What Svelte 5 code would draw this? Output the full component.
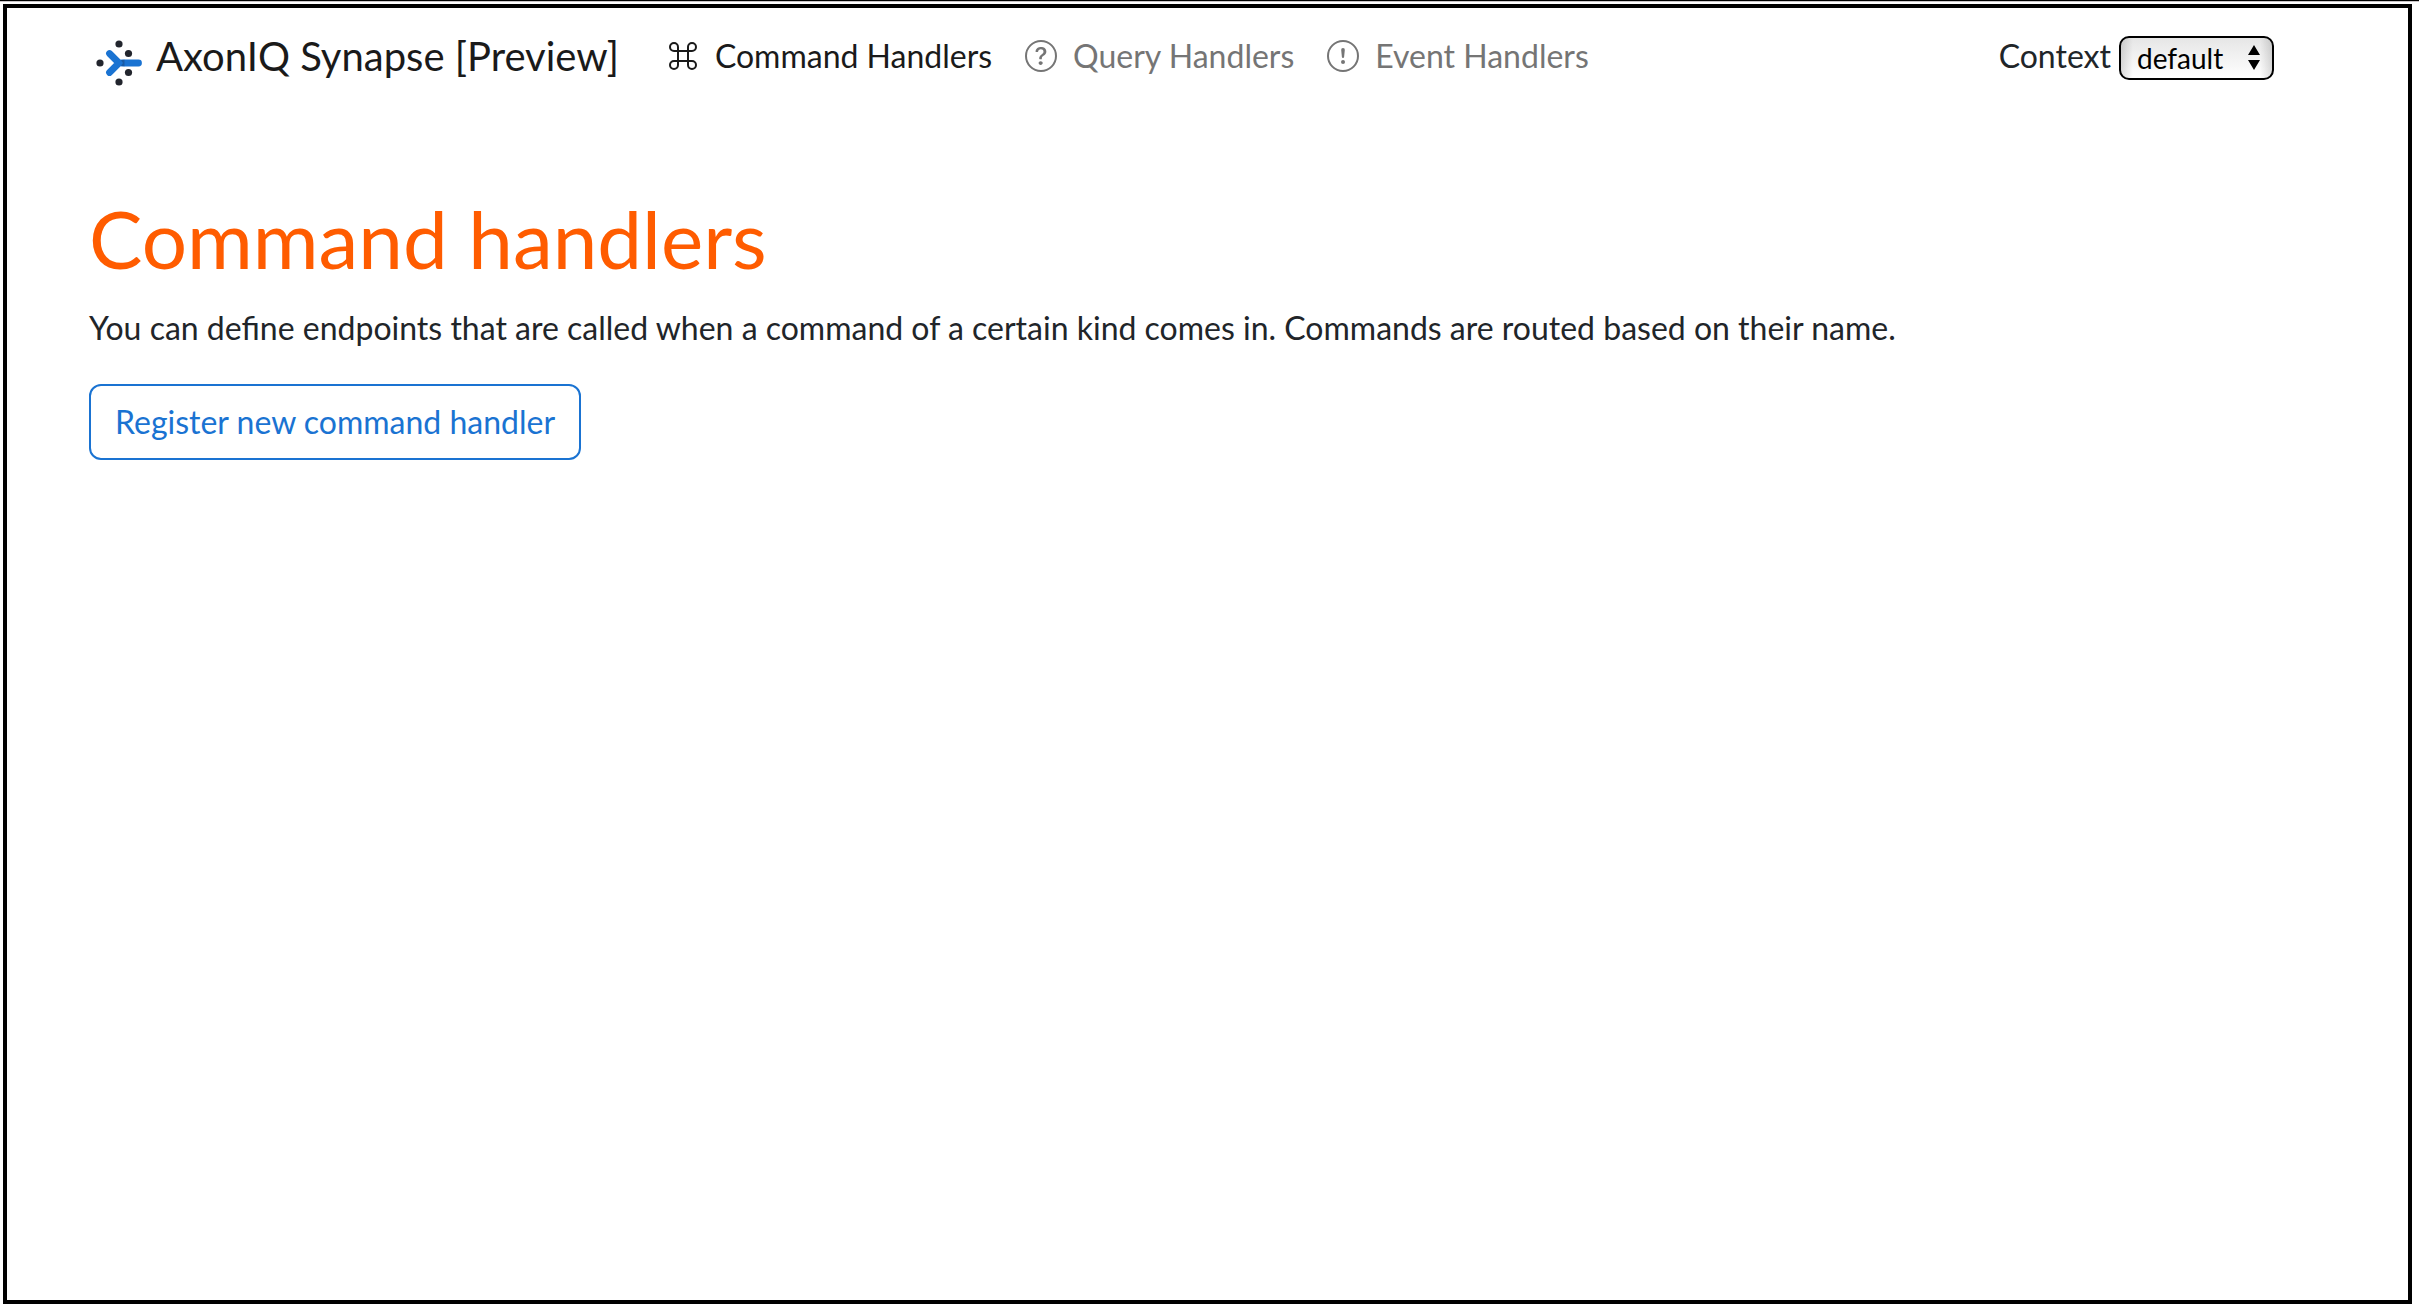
<script>
  let context = $state('default');
  let active = $state('command');
</script>

<div class="window">
  <div class="frame">
    <header>
      <a class="brand" href="#home">
        <svg class="logo" viewBox="0 0 46 46" aria-hidden="true">
          <g fill="#22252d">
            <circle cx="23" cy="4" r="3.6" />
            <circle cx="32.5" cy="13.5" r="3.6" />
            <circle cx="4" cy="23" r="3.6" />
            <circle cx="32.5" cy="32.5" r="3.6" />
            <circle cx="23" cy="42" r="3.6" />
          </g>
          <g fill="none" stroke="#1a73d2" stroke-width="6.8" stroke-linecap="round" stroke-linejoin="round">
            <path d="M26 23H42.5" />
            <path d="M13.5 13.5L23 23L13.5 32.5" />
          </g>
          <path d="M25 20.2L28.5 19.8V26.2L25 25.8L27 23Z" fill="#195aa5" />
        </svg>
        <span>AxonIQ Synapse [Preview]</span>
      </a>
      <nav>
        <a href="#command" class:active={active === 'command'} onclick={() => (active = 'command')}>
          <svg viewBox="0 0 16 16" fill="currentColor" aria-hidden="true">
            <path d="M3.5 2A1.5 1.5 0 0 1 5 3.5V5H3.500a1.500 1.500 0 1 1 0-3zM6 5V3.500A2.500 2.500 0 1 0 3.500 6H5v4H3.500A2.500 2.500 0 1 0 6 12.500V11h4v1.500a2.500 2.500 0 1 0 2.500-2.500H11V6h1.500A2.500 2.500 0 1 0 10 3.500V5H6zm4 1v4H6V6h4zm1-1V3.500A1.500 1.500 0 1 1 12.500 5H11zm0 6h1.500a1.500 1.500 0 1 1-1.500 1.500V11zm-6 0v1.500A1.500 1.500 0 1 1 3.500 11H5z" />
          </svg>
          <span>Command Handlers</span>
        </a>
        <a href="#query" class:active={active === 'query'} onclick={() => (active = 'query')}>
          <svg viewBox="0 0 16 16" fill="currentColor" aria-hidden="true">
            <path d="M8 15A7 7 0 1 1 8 1a7 7 0 0 1 0 14zm0 1A8 8 0 1 0 8 0a8 8 0 0 0 0 16z" />
            <path d="M5.255 5.786a.237.237 0 0 0 .241.247h.825c.138 0 .248-.113.266-.250.090-.656.540-1.134 1.342-1.134.686 0 1.314.343 1.314 1.168 0 .635-.374.927-.965 1.371-.673.489-1.206 1.060-1.168 1.987l.003.217a.250.250 0 0 0 .250.246h.811a.250.250 0 0 0 .250-.250v-.105c0-.718.273-.927 1.010-1.486.609-.463 1.244-.977 1.244-2.056 0-1.511-1.276-2.241-2.673-2.241-1.267 0-2.655.590-2.750 2.286zm1.557 5.763c0 .533.425.927 1.010.927.609 0 1.028-.394 1.028-.927 0-.552-.420-.940-1.029-.940-.584 0-1.009.388-1.009.940z" />
          </svg>
          <span>Query Handlers</span>
        </a>
        <a href="#event" class:active={active === 'event'} onclick={() => (active = 'event')}>
          <svg viewBox="0 0 16 16" fill="currentColor" aria-hidden="true">
            <path d="M8 15A7 7 0 1 1 8 1a7 7 0 0 1 0 14zm0 1A8 8 0 1 0 8 0a8 8 0 0 0 0 16z" />
            <path d="M7.002 11a1 1 0 1 1 2 0 1 1 0 0 1-2 0zM7.100 4.995a.905.905 0 1 1 1.800 0l-.350 3.507a.552.552 0 0 1-1.100 0L7.100 4.995z" />
          </svg>
          <span>Event Handlers</span>
        </a>
      </nav>
      <div class="context">
        <label for="context">Context</label>
        <div class="picker">
          <select id="context" bind:value={context}>
            <option value="default">default</option>
          </select>
          <svg viewBox="0 0 12 26" aria-hidden="true"><path d="M6 0L12 10H0ZM0 15H12L6 25Z" /></svg>
        </div>
      </div>
    </header>
    <main>
      <h1>Command handlers</h1>
      <p>You can define endpoints that are called when a command of a certain kind comes in. Commands are routed based on their name.</p>
      <button type="button">Register new command handler</button>
    </main>
  </div>
</div>

<style>
  :global(body) {
    margin: 0;
    background: #fff;
  }
  .window {
    box-sizing: border-box;
    min-height: 100vh;
    display: flex;
    flex-direction: column;
    border-top: 1px solid #000;
    padding: 3px 7px 1px 3px;
    box-shadow: inset 0 1px #c9c5c7;
    font: 32px/48px Lato, sans-serif;
    color: #212529;
  }
  .frame {
    flex: 1;
    border: 4px solid #000;
  }
  header {
    display: flex;
    align-items: center;
    padding: 18px 134px 18px 89px;
  }
  a {
    display: flex;
    align-items: center;
    text-decoration: none;
    white-space: nowrap;
  }
  .brand {
    gap: 14px;
    margin-right: 48px;
    font-size: 40px;
    line-height: 60px;
    color: #1a1a1a;
  }
  .logo {
    width: 46px;
    height: 46px;
    margin-top: 14px;
  }
  nav {
    display: flex;
    gap: 33px;
  }
  nav a {
    gap: 16px;
    color: #757575;
  }
  nav a.active {
    color: #1a1a1a;
  }
  nav svg {
    width: 32px;
    height: 32px;
  }
  .context {
    display: flex;
    align-items: center;
    gap: 8px;
    margin-left: auto;
  }
  .picker {
    display: grid;
    align-items: center;
    padding-top: 4px;
  }
  .picker > * {
    grid-area: 1 / 1;
  }
  .picker svg {
    width: 12px;
    height: 26px;
    margin-right: 14px;
    justify-self: end;
    pointer-events: none;
  }
  select {
    appearance: none;
    box-sizing: border-box;
    height: 44px;
    padding: 0 48px 0 16px;
    border: 2px solid #000;
    border-radius: 10px;
    background:
      linear-gradient(90deg, #0002, #0000 12px, #0000 calc(100% - 12px), #0002),
      linear-gradient(#e6e6e6, #fff);
    font: 28px/40px Lato, sans-serif;
    color: #000;
  }
  main {
    padding: 86px 82px;
  }
  h1 {
    margin: 0 0 18px;
    font-size: 80px;
    font-weight: 400;
    line-height: 96px;
    color: #ff5c00;
  }
  p {
    margin: 0 0 32px;
  }
  button {
    padding: 12px 24px;
    border: 2px solid #1a73d2;
    border-radius: 12px;
    background: #fff;
    font: inherit;
    color: #1a73d2;
  }
</style>
